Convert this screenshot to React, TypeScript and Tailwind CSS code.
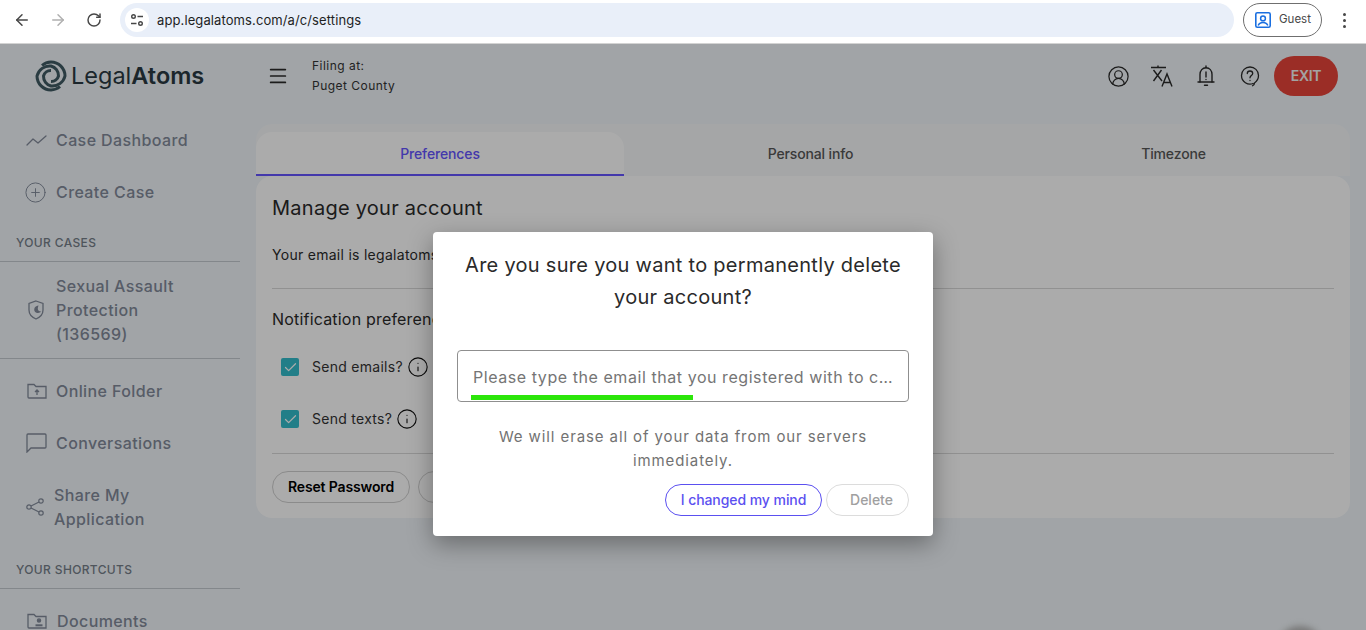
import React from "react";
import { ArrowLeft, ArrowRight, RotateCw, Menu, CircleUserRound, CirclePlus, Check, Info } from "lucide-react";

const font = { fontFamily: "Inter, 'Liberation Sans', sans-serif" };

const NavItem: React.FC<{ icon: React.ReactNode; className?: string; children: React.ReactNode }> = ({ icon, className = "h-[52px]", children }) => (
  <div className={`flex items-center pl-6 pr-4 text-[#828a9a] ${className}`}>
    <span className="w-8 shrink-0 flex items-center">{icon}</span>
    <span className="text-base font-medium leading-6 tracking-[0.025em] w-[140px]">{children}</span>
  </div>
);

const Logo = () => (
  <svg width="32" height="32" viewBox="0 0 32 32" fill="none" stroke="#3f5a63" strokeWidth="3">
    <path d="M7 5.5A14 14 0 0 1 16 2A14 14 0 0 1 30 16A13 13 0 0 1 16 26A10 10 0 0 1 8.5 16A7.5 7.5 0 0 1 16 10.5" />
    <path d="M7 5.5A14 14 0 0 1 16 2A14 14 0 0 1 30 16A13 13 0 0 1 16 26A10 10 0 0 1 8.5 16A7.5 7.5 0 0 1 16 10.5" transform="rotate(180 16 16)" />
  </svg>
);

const BrowserBar = () => (
  <div className="h-11 shrink-0 bg-white border-b border-[#d3d3d3] flex items-center pb-[3px] pl-[13px] pr-[20px]">
    <ArrowLeft className="w-[18px] h-[18px] text-[#474747]" strokeWidth={2} />
    <ArrowRight className="w-[18px] h-[18px] ml-[18px] text-[#b0b0b0]" strokeWidth={2} />
    <RotateCw className="w-4 h-4 ml-[19px] text-[#474747]" strokeWidth={2.2} />
    <div className="ml-[18px] flex-1 h-[34px] rounded-full bg-[#e9eff9] flex items-center pl-[5px]">
      <span className="w-6 h-6 rounded-full bg-white flex items-center justify-center">
        <svg width="14" height="14" viewBox="0 0 14 14" fill="none" stroke="#474747" strokeWidth="1.4">
          <circle cx="3.5" cy="3.5" r="1.8" />
          <path d="M7.5 3.5H13M1 10.5H6.5" />
          <circle cx="10.5" cy="10.5" r="1.8" />
        </svg>
      </span>
      <span className="ml-2 mt-[1px] text-[13px] tracking-[0.008em] text-[#1f1f1f]">app.legalatoms.com/a/c/settings</span>
    </div>
    <div className="ml-[9px] w-[79px] h-[34px] rounded-full border border-[#6f6f6f] flex items-center pl-[11px]">
      <svg width="16" height="16" viewBox="0 0 16 16" fill="none">
        <rect x="0.8" y="0.8" width="14.4" height="14.4" rx="1.5" stroke="#1a6fe0" strokeWidth="1.6" />
        <circle cx="8" cy="6.4" r="2.4" stroke="#1a6fe0" strokeWidth="1.5" />
        <path d="M3.2 13.5C4 11 6 10.4 8 10.4C10 10.4 12 11 12.8 13.5" stroke="#1a6fe0" strokeWidth="1.5" />
      </svg>
      <span className="ml-2 text-[11.5px] text-[#474747]">Guest</span>
    </div>
    <div className="ml-[21px] flex flex-col gap-[3px]">
      <span className="w-[3px] h-[3px] rounded-full bg-[#474747]" />
      <span className="w-[3px] h-[3px] rounded-full bg-[#474747]" />
      <span className="w-[3px] h-[3px] rounded-full bg-[#474747]" />
    </div>
  </div>
);

const HeaderIcon: React.FC<{ children: React.ReactNode }> = ({ children }) => (
  <span className="w-11 flex items-center justify-center">{children}</span>
);

const Header = () => (
  <div className="h-16 flex items-center text-[#2a2a2a]">
    <div className="w-[270px] pl-[35px] flex items-center">
      <Logo />
      <span className="ml-1 text-[23.5px] leading-8 text-[#2b3a42]">
        Legal<span className="font-semibold">Atoms</span>
      </span>
    </div>
    <Menu className="w-[22px] h-[22px] -ml-[3px]" strokeWidth={1.9} />
    <div className="ml-[23px] -mt-[1px] text-xs leading-5 tracking-[0.04em] text-[#333]">
      <div>Filing at:</div>
      <div>Puget County</div>
    </div>
    <div className="ml-auto pr-7 flex items-center">
      <HeaderIcon>
        <CircleUserRound className="w-[23px] h-[23px]" strokeWidth={1.3} />
      </HeaderIcon>
      <HeaderIcon>
        <svg width="24" height="24" viewBox="0 0 24 24" fill="none" stroke="currentColor" strokeWidth="1.4">
          <path d="M1 3.5H16M8 1.5V3.5M3.5 6L12 17M11.5 6L3.5 17" />
          <path d="M12 22.5L17 10L22 22.5M13.8 18.5H20.2" />
        </svg>
      </HeaderIcon>
      <HeaderIcon>
        <svg width="18" height="22" viewBox="0 0 18 22" fill="none" stroke="currentColor" strokeWidth="1.4" strokeLinecap="round">
          <path d="M3 17V9.5C3 5.5 5.5 2.8 9 2.8C12.5 2.8 15 5.5 15 9.5V17" />
          <path d="M1 17H17M7.5 20.3H10.5M9 1V2.8M9 7V12M9 14.5V14.6" />
        </svg>
      </HeaderIcon>
      <HeaderIcon>
        <svg width="20" height="22" viewBox="0 0 20 22" fill="none" stroke="currentColor" strokeWidth="1.3" strokeLinecap="round">
          <path d="M13 18.5C8 20.5 1.5 17 1.5 10.5C1.5 5.5 5.5 2 10 2C14.5 2 18.5 5.5 18.5 10.5C18.5 14 16.5 16.5 14.5 18C14.5 19 14 20 12.5 20.8" />
          <path d="M7.3 8.5C7.3 6.8 8.6 6 10 6C11.5 6 12.7 7 12.7 8.4C12.7 10.5 10 10.6 10 12.8M10 15.5V15.6" />
        </svg>
      </HeaderIcon>
      <div className="ml-[2px] w-16 h-10 rounded-full bg-[#e8443a] text-[#f4f4f4] font-semibold text-sm tracking-tight flex items-center justify-center">
        EXIT
      </div>
    </div>
  </div>
);

const Sidebar = () => (
  <aside className="w-[240px] shrink-0 pt-[6px]">
    <NavItem
      icon={
        <svg className="ml-[1px]" width="24" height="14" viewBox="0 0 24 14" fill="none" stroke="currentColor" strokeWidth="1.3" strokeLinecap="round" strokeLinejoin="round">
          <path d="M2 12L8 6L13 10L21 3" />
        </svg>
      }
    >
      Case Dashboard
    </NavItem>
    <NavItem icon={<CirclePlus className="w-[23px] h-[23px]" strokeWidth={1} />}>Create Case</NavItem>
    <div className="h-[44px] pl-4 pt-[17px] text-xs leading-4 font-medium tracking-[0.03em] text-[#767f8a] border-b border-[#c4c9d0]">YOUR CASES</div>
    <NavItem
      className="h-[97px] border-b border-[#c4c9d0]"
      icon={
        <svg className="ml-[4px]" width="16" height="20" viewBox="0 0 16 20" fill="none" stroke="currentColor" strokeWidth="1.3">
          <path d="M8 1L15 3.5V10C15 14.5 11.5 17.5 8 19C4.5 17.5 1 14.5 1 10V3.5L8 1Z" />
          <path d="M9.5 6.5C7.5 7 6.5 8.5 7 10.5C7.5 12 9.5 13 11.5 12C9.5 11.5 8.5 9 9.5 6.5Z" fill="currentColor" />
        </svg>
      }
    >
      Sexual Assault Protection (136569)
    </NavItem>
    <div className="h-[6px]" />
    <NavItem
      icon={
        <svg className="ml-[3px]" width="20" height="16" viewBox="0 0 20 16" fill="none" stroke="currentColor" strokeWidth="1.3">
          <path d="M1 14V1.5H7L9 3.5H19V15H2C1.4 15 1 14.6 1 14Z" />
          <path d="M10 12V7M8 9L10 7L12 9" />
        </svg>
      }
    >
      Online Folder
    </NavItem>
    <NavItem
      icon={
        <svg className="ml-[2px]" width="21" height="20" viewBox="0 0 21 20" fill="none" stroke="currentColor" strokeWidth="1.3">
          <path d="M1 19V2C1 1.4 1.4 1 2 1H19C19.6 1 20 1.4 20 2V14C20 14.6 19.6 15 19 15H5L1 19Z" />
        </svg>
      }
    >
      Conversations
    </NavItem>
    <NavItem
      className="h-[76px]"
      icon={
        <svg className="ml-[2px]" width="18" height="18" viewBox="0 0 18 18" fill="none" stroke="currentColor" strokeWidth="1.2">
          <circle cx="15" cy="3" r="2.2" />
          <circle cx="3" cy="9" r="2.2" />
          <circle cx="15" cy="15" r="2.2" />
          <path d="M5 8L13 4M5 10L13 14" />
        </svg>
      }
    >
      <span className="block -ml-[2px] w-[120px]">Share My Application</span>
    </NavItem>
    <div className="h-[44px] pl-4 pt-[17px] text-xs leading-4 font-medium tracking-[0.03em] text-[#767f8a] border-b border-[#c4c9d0]">YOUR SHORTCUTS</div>
    <div className="h-[6px]" />
    <NavItem
      icon={
        <svg className="ml-[3px]" width="20" height="16" viewBox="0 0 20 16" fill="none" stroke="currentColor" strokeWidth="1.3">
          <path d="M1 14V1.5H7L9 3.5H19V15H2C1.4 15 1 14.6 1 14Z" />
          <circle cx="12" cy="7.5" r="1.6" fill="currentColor" />
          <path d="M8.5 12.3H15.5" strokeWidth="2" />
        </svg>
      }
    >
      <span className="ml-[1px]">Documents</span>
    </NavItem>
  </aside>
);

const CheckRow: React.FC<{ label: string }> = ({ label }) => (
  <div className="h-[52px] flex items-center pl-[9px]">
    <span className="w-[18px] h-[18px] rounded-[2px] bg-[#33bccb] flex items-center justify-center">
      <Check className="w-[15px] h-[15px] text-white" strokeWidth={2} />
    </span>
    <span className="ml-[13px] text-sm tracking-[0.02em] text-[#333]">{label}</span>
    <Info className="ml-[4px] w-[22px] h-[22px] text-[#111]" strokeWidth={1.2} />
  </div>
);

const Settings = () => (
  <main className="w-[1094px] mt-[16px] ml-[16px]">
    <div className="h-[52px] pt-2 rounded-t-2xl bg-[#f6f8fa] flex text-sm font-medium tracking-[-0.01em] text-[#575757]">
      <div className="w-[368px] pt-[2px] bg-white rounded-t-2xl border-b-2 border-[#6454ff] text-[#6454ff] flex items-center justify-center">Preferences</div>
      <div className="w-[373px] flex items-center justify-center">Personal info</div>
      <div className="flex-1 flex items-center justify-center">Timezone</div>
    </div>
    <div className="h-[342px] bg-white rounded-2xl px-4 pt-[18px] text-[#2a2a2a]">
      <h2 className="text-xl leading-7 tracking-[0.013em]">Manage your account</h2>
      <p className="mt-[23px] h-[44px] text-sm leading-5 tracking-[0.02em] border-b border-[#d8d8d8]">Your email is legalatoms</p>
      <div className="mt-[18px] text-base leading-6 tracking-[0.012em]">Notification preferences</div>
      <div className="mt-[10px]">
        <CheckRow label="Send emails?" />
        <CheckRow label="Send texts?" />
      </div>
      <div className="mt-[8px] pt-[17px] border-t border-[#d8d8d8] flex gap-2">
        <div className="w-[138px] h-8 rounded-full border border-[#d0d0d0] flex items-center justify-center text-sm font-semibold tracking-[-0.01em] text-black">Reset Password</div>
        <div className="w-[138px] h-8 rounded-full border border-[#d0d0d0]" />
      </div>
    </div>
  </main>
);

const Modal = () => (
  <div className="w-[500px] h-[304px] bg-white rounded-[4px] shadow-[0_8px_24px_rgba(0,0,0,0.35)] px-6 pt-[17px] text-center">
    <h3 className="text-xl leading-8 tracking-[0.014em] text-[#2a2a2a]">
      Are you sure you want to permanently delete your account?
    </h3>
    <div className="relative mt-[37px]">
      <input
        readOnly
        className="w-full h-[52px] rounded-[4px] border border-[#8f8f8f] px-[15px] pt-[2px] text-base tracking-[0.035em] text-ellipsis placeholder:text-[#757575] outline-none"
        placeholder="Please type the email that you registered with to confirm"
      />
      <span className="absolute left-[14px] top-[45px] w-[222px] h-[5px] bg-[#2ce60a]" />
    </div>
    <p className="mt-[23px] px-6 text-[15px] leading-6 tracking-[0.06em] text-[#727272]">
      We will erase all of your data from our servers immediately.
    </p>
    <div className="mt-[11px] flex justify-end gap-1">
      <button className="w-[157px] h-8 rounded-full border border-[#5b50f0] text-sm font-medium tracking-[-0.005em] text-[#5b50f0]">I changed my mind</button>
      <button className="w-[83px] h-8 rounded-full border border-[#dcdcdc] pl-[8px] text-sm font-medium text-[#a0a0a0]">Delete</button>
    </div>
  </div>
);

export default function App() {
  return (
    <div className="h-[630px] flex flex-col overflow-hidden" style={font}>
      <BrowserBar />
      <div className="relative flex-1 bg-[#f0f5f9] overflow-hidden">
        <Header />
        <div className="flex">
          <Sidebar />
          <Settings />
        </div>
        <div className="absolute left-[1276px] top-[582px] w-12 h-12 rounded-full bg-[#b4b4b4] blur-[3px]" />
        <div className="absolute inset-0 bg-black/33 flex justify-center pt-[188px]">
          <Modal />
        </div>
      </div>
    </div>
  );
}
